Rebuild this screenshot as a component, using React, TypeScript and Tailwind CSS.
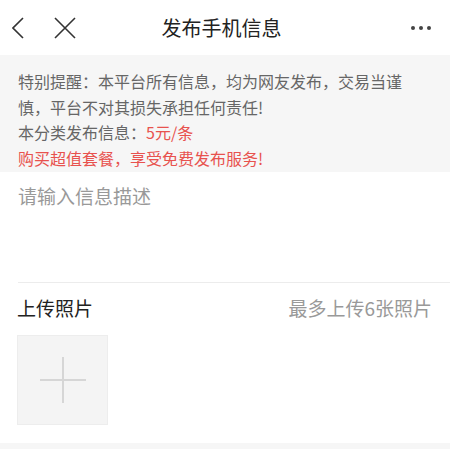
import React from "react";

const font = { fontFamily: '"Noto Sans CJK SC", "Noto Sans", sans-serif' };

export default function App() {
  return (
    <div className="w-[450px] h-[449px] bg-white overflow-hidden flex flex-col" style={font}>
      {/* Header */}
      <div className="h-[55px] shrink-0 flex items-center relative px-[12px]">
        <svg width="12" height="22" viewBox="0 0 12 22" className="text-[#333]">
          <path d="M11 1 L1 11 L11 21" fill="none" stroke="currentColor" strokeWidth="1.6" />
        </svg>
        <svg width="22" height="22" viewBox="0 0 22 22" className="ml-[30px] text-[#333]">
          <path d="M1 1 L21 21 M21 1 L1 21" fill="none" stroke="currentColor" strokeWidth="1.6" />
        </svg>
        <div className="flex-1 text-center text-[20px] text-[#222] leading-none -ml-[44px]">发布手机信息</div>
        <div className="flex gap-[4px] mr-[7px]">
          <span className="w-[4px] h-[4px] rounded-full bg-[#444]" />
          <span className="w-[4px] h-[4px] rounded-full bg-[#444]" />
          <span className="w-[4px] h-[4px] rounded-full bg-[#444]" />
        </div>
      </div>

      {/* Notice */}
      <div className="h-[117px] shrink-0 bg-[#f6f6f6] pl-[18px] pt-[14px] text-[16px] leading-[25.5px] text-[#666]">
        <p className="w-[396px]">特别提醒：本平台所有信息，均为网友发布，交易当谨慎，平台不对其损失承担任何责任!</p>
        <p>
          本分类发布信息：<span className="text-[#e8524e]">5元/条</span>
        </p>
        <p className="text-[#e8524e]">购买超值套餐，享受免费发布服务!</p>
      </div>

      {/* Description */}
      <div className="h-[110px] shrink-0 pl-[18px] pt-[11px]">
        <div className="text-[19px] leading-[26px] text-[#999]">请输入信息描述</div>
      </div>

      {/* Upload */}
      <div className="ml-[18px] border-t border-[#ececec] pr-[18px] pt-[11px]">
        <div className="flex justify-between items-center h-[26px]">
          <span className="text-[19px] text-[#222] leading-none -ml-[1px]">上传照片</span>
          <span className="text-[19px] text-[#999] leading-none">最多上传6张照片</span>
        </div>
      </div>
      <div className="pl-[17px] pt-[15px]">
        <div className="w-[91px] h-[90px] bg-[#f4f4f4] border border-[#ededed] flex items-center justify-center">
          <svg width="46" height="46" viewBox="0 0 46 46">
            <path d="M0 23 H46 M23 0 V46" stroke="#d6d6d6" strokeWidth="2" />
          </svg>
        </div>
      </div>
      <div className="mt-[18px] flex-1 bg-[#f6f6f6]" />
    </div>
  );
}
